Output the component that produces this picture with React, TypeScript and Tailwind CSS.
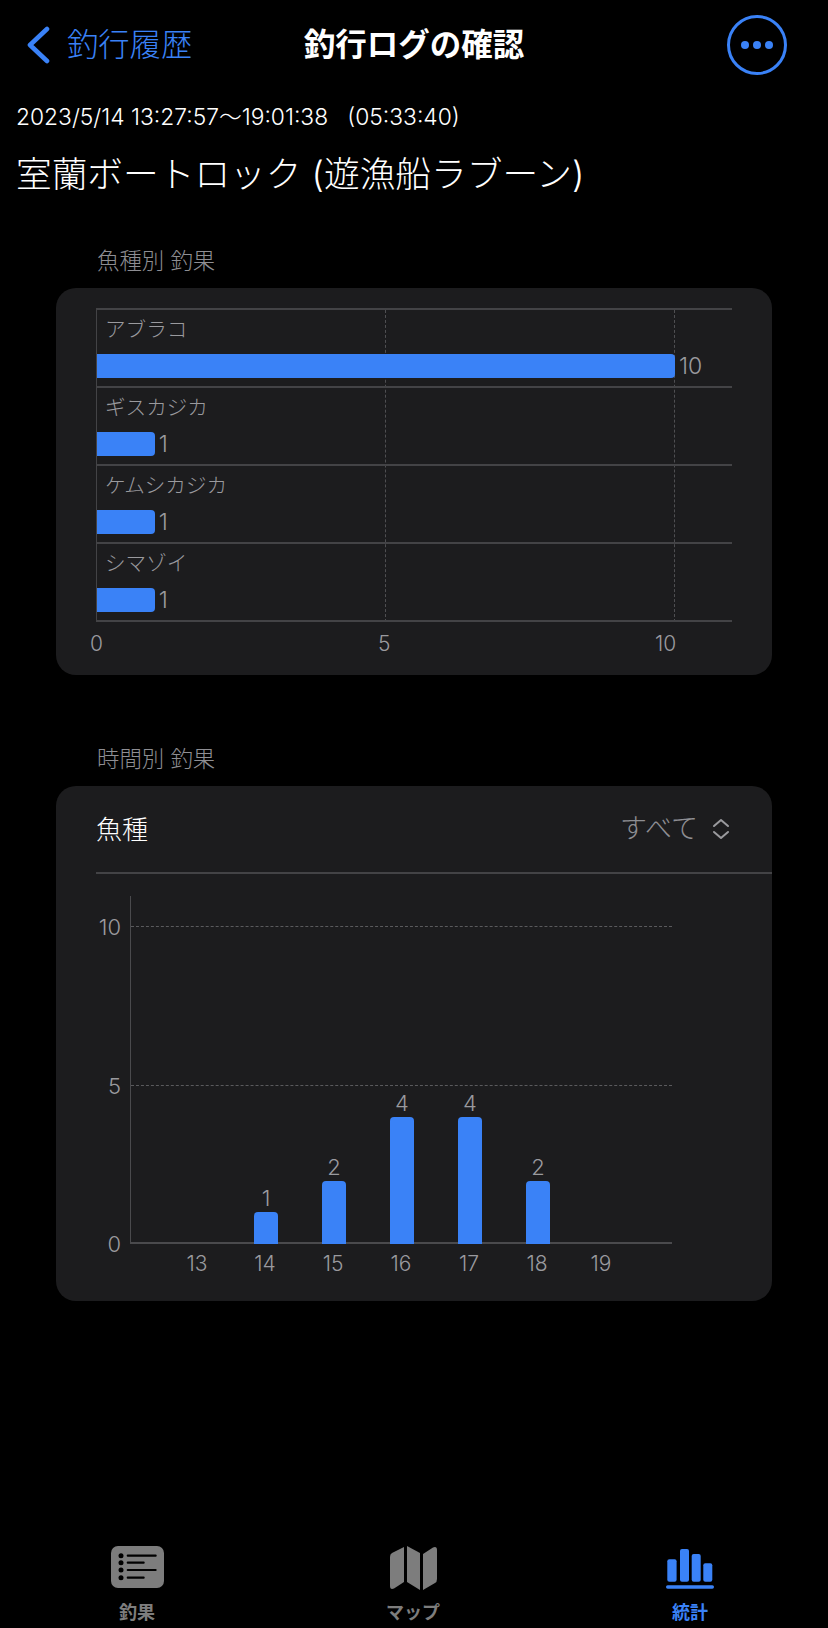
const fontStack = "font-[family-name:Inter,'Noto_Sans_CJK_JP',sans-serif]";

const species = [
  { name: "アブラコ", count: 10 },
  { name: "ギスカジカ", count: 1 },
  { name: "ケムシカジカ", count: 1 },
  { name: "シマゾイ", count: 1 },
];

const hours = [
  { hour: 13, count: 0 },
  { hour: 14, count: 1 },
  { hour: 15, count: 2 },
  { hour: 16, count: 4 },
  { hour: 17, count: 4 },
  { hour: 18, count: 2 },
  { hour: 19, count: 0 },
];

const SpeciesChart = () => {
  return (
    <div className="mt-[13px] h-[387px] w-[716px] ml-[56px] rounded-[20px] bg-[#1c1c1e] pt-[20px] pl-10">
      <div className="relative w-[636px] border-l border-t-2 border-[#434346]">
        <div className="absolute left-[288px] top-0 bottom-0 border-l border-dashed border-[#4f4f52]" />
        <div className="absolute left-[577px] top-0 bottom-0 border-l border-dashed border-[#4f4f52]" />
        {species.map((s) => (
          <div key={s.name} className="relative h-[78px] border-b-2 border-[#434346] pt-[6px]">
            <div className="pl-[8px] text-[20.6px] leading-[28px] font-light text-[#9a9a9e]">{s.name}</div>
            <div className="mt-[10px] flex items-center">
              <div className="h-6 rounded-r-[4px] bg-[#3a82f7]" style={{ width: s.count * 57.8 }} />
              <span className="ml-[4px] text-[23px] leading-6 font-light text-[#9a9a9e]">{s.count}</span>
            </div>
          </div>
        ))}
      </div>
      <div className="mt-[10px] flex w-[636px] text-[21px] leading-6 font-light text-[#9a9a9e]">
        <span className="w-[289px] -ml-[6px]">0</span>
        <span className="w-[277px] ml-[-1px]">5</span>
        <span>10</span>
      </div>
    </div>
  );
};

const HourChart = () => {
  return (
    <div className="mt-[13px] h-[515px] w-[716px] ml-[56px] rounded-[20px] bg-[#1c1c1e] pl-10">
      <div className="flex h-[88px] items-center justify-between border-b-2 border-[#434346] pr-[42px]">
        <span className="text-[26px] font-light text-white">魚種</span>
        <div className="flex items-center gap-[14px]">
          <span className="text-[27px] font-light text-[#8e8e93]">すべて</span>
          <svg width="18" height="22" viewBox="0 0 18 22" fill="none" stroke="#9a9a9e" strokeWidth="2" strokeLinecap="round" strokeLinejoin="round">
            <path d="M2 8 L9 2 L16 8" />
            <path d="M2 14 L9 20 L16 14" />
          </svg>
        </div>
      </div>
      <div className="ml-[-2px] mt-[22px] flex">
        <div className="relative w-[36px] h-[348px] text-right text-[22px] leading-6 font-light text-[#9a9a9e]">
          <span className="absolute right-[9px] top-[19px]">10</span>
          <span className="absolute right-[9px] top-[178px]">5</span>
          <span className="absolute right-[9px] top-[336px]">0</span>
        </div>
        <div>
          <div className="relative h-[348px] w-[542px] border-l border-b-2 border-[#4a4a4d]">
            <div className="absolute left-0 right-0 top-[30px] border-t border-dashed border-[#5a5a5d]" />
            <div className="absolute left-0 right-0 top-[189px] border-t border-dashed border-[#5a5a5d]" />
            <div className="flex h-full translate-y-[2px] items-end pl-[33px]">
              {hours.map((h) => (
                <div key={h.hour} className="flex w-[68px] flex-col items-center">
                  {h.count > 0 && (
                    <>
                      <span className="text-[22px] leading-[28px] font-light text-[#9a9a9e]">{h.count}</span>
                      <div className="w-6 rounded-t-[4px] bg-[#3a82f7]" style={{ height: h.count * 31.7 }} />
                    </>
                  )}
                </div>
              ))}
            </div>
          </div>
          <div className="mt-[8px] flex pl-[33px] text-[21px] leading-6 font-light text-[#9a9a9e]">
            {hours.map((h) => (
              <span key={h.hour} className={h.hour === 19 ? "w-[68px] text-center -ml-[4px]" : "w-[68px] text-center"}>
                {h.hour}
              </span>
            ))}
          </div>
        </div>
      </div>
    </div>
  );
};

const TabBar = () => {
  return (
    <div className="mt-auto flex h-[84px] items-start pt-[2px]">
      <div className="ml-[100px] flex w-[74px] flex-col items-center">
        <svg width="53" height="42" viewBox="0 0 53 42">
          <rect x="0" y="0" width="53" height="42" rx="7" fill="#7d7d7d" />
          <g fill="#000">
            <circle cx="10" cy="9.7" r="2.5" />
            <circle cx="10" cy="16.7" r="2.5" />
            <circle cx="10" cy="24" r="2.5" />
            <circle cx="10" cy="31.7" r="2.5" />
            <rect x="15.7" y="8.6" width="30" height="2.2" rx="1" />
            <rect x="15.7" y="15.6" width="18" height="2.2" rx="1" />
            <rect x="15.7" y="22.9" width="30" height="2.2" rx="1" />
            <rect x="15.7" y="30.6" width="18" height="2.2" rx="1" />
          </g>
        </svg>
        <span className="mt-[13px] text-[18px] leading-6 font-bold text-[#7d7d7d]">釣果</span>
      </div>
      <div className="ml-[202px] flex w-[74px] flex-col items-center">
        <svg width="47" height="44" viewBox="0 0 47 44" fill="#7d7d7d">
          <path d="M14 1 L14 36 L4 42.5 Q0 44 0 40 L0 11 Q0 8 2 7 Z" />
          <path d="M17 0 L30 7 L30 44 L17 36 Z" />
          <path d="M33 8 L43 1.5 Q47 0 47 4 L47 33 Q47 36 45 37 L33 44 Z" />
        </svg>
        <span className="mt-[11px] text-[18px] leading-6 font-bold text-[#7d7d7d]">マップ</span>
      </div>
      <div className="ml-[203px] flex w-[74px] flex-col items-center pt-[3px]">
        <svg width="48" height="41" viewBox="0 0 48 41" fill="#3a82f7">
          <rect x="1.3" y="10.3" width="9.3" height="22.4" rx="2" />
          <rect x="14" y="0" width="9" height="32.7" rx="2" />
          <rect x="25.7" y="5" width="9" height="27.7" rx="2" />
          <rect x="37.3" y="14.3" width="9" height="18.4" rx="2" />
          <rect x="0" y="36.3" width="48" height="3.4" rx="1.7" />
        </svg>
        <span className="mt-[11px] text-[18px] leading-6 font-bold text-[#3a82f7]">統計</span>
      </div>
    </div>
  );
};

const App = () => {
  return (
    <div className={`flex h-[1628px] w-[828px] flex-col overflow-hidden bg-black ${fontStack}`}>
      {/* Nav */}
      <div className="mt-[15px] grid grid-cols-[1fr_auto_1fr] items-center px-[27px]">
        <div className="flex items-center gap-[17px]">
          <svg width="23" height="38" viewBox="0 0 23 38" fill="none" stroke="#3a82f7" strokeWidth="4.6" strokeLinecap="round" strokeLinejoin="round">
            <path d="M20 3 L3 19 L20 35" />
          </svg>
          <span className="text-[31.3px] font-light text-[#3a82f7]">釣行履歴</span>
        </div>
        <span className="text-[31.5px] font-semibold text-white">釣行ログの確認</span>
        <div className="mr-[14px] flex size-[60px] items-center justify-center justify-self-end gap-[4px] rounded-full border-[3px] border-[#3a82f7]">
          <span className="size-[8px] rounded-full bg-[#3a82f7]" />
          <span className="size-[8px] rounded-full bg-[#3a82f7]" />
          <span className="size-[8px] rounded-full bg-[#3a82f7]" />
        </div>
      </div>

      <div className="mt-[28px] pl-[16px] text-[22.8px] leading-[28px] font-light whitespace-pre text-white">
        2023/5/14 13:27:57〜19:01:38   (05:33:40)
      </div>
      <div className="mt-[21px] pl-[16px] text-[35.7px] leading-[44px] font-light text-white">
        室蘭ボートロック (遊漁船ラブーン)
      </div>

      <div className="mt-[51px] pl-[97px] text-[22.4px] leading-[28px] font-light text-[#8e8e93]">魚種別 釣果</div>
      <SpeciesChart />

      <div className="mt-[70px] pl-[97px] text-[22.4px] leading-[28px] font-light text-[#8e8e93]">時間別 釣果</div>
      <HourChart />

      <TabBar />
    </div>
  );
};

export default App;
